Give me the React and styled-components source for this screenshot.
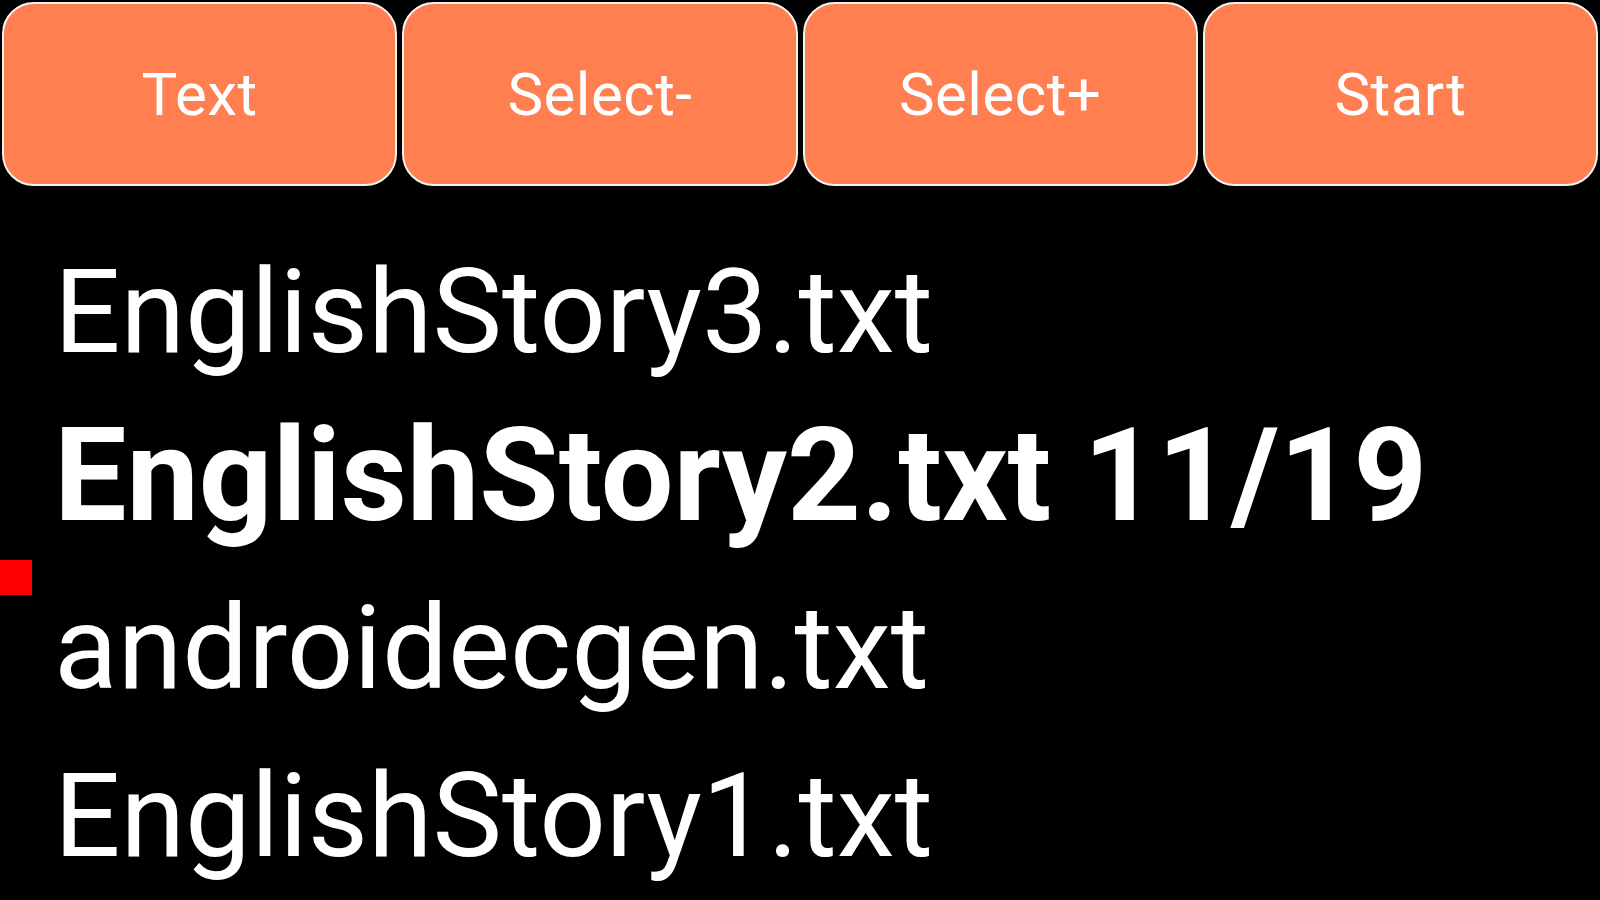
import React from "react";
import styled, { createGlobalStyle } from "styled-components";

const GlobalStyle = createGlobalStyle`
  html, body {
    margin: 0;
    padding: 0;
    background: #000;
  }
  body {
    font-family: Roboto, "Liberation Sans", sans-serif;
  }
`;

const Screen = styled.div`
  width: 1600px;
  height: 900px;
  background: #000;
  overflow: hidden;
`;

const Toolbar = styled.div`
  display: flex;
  gap: 5px;
  padding: 2px 2px 0 2px;
`;

const ToolButton = styled.button`
  flex: 1;
  height: 184px;
  background: #ff7f50;
  border: 2px solid #f4f4f4;
  border-radius: 32px;
  color: #fff;
  font-family: Roboto, "Liberation Sans", sans-serif;
  font-size: 60px;
  letter-spacing: 0.5px;
  padding: 0;
  cursor: pointer;
`;

const FileList = styled.ul`
  position: relative;
  list-style: none;
  margin: 42px 0 0 0;
  padding: 0 0 0 54px;
`;

const FileRow = styled.li`
  color: #fff;
  font-family: Roboto, sans-serif;
  font-size: ${(p) => (p.$current ? "129px" : "117px")};
  font-weight: ${(p) => (p.$current ? 700 : 400)};
  line-height: ${(p) => (p.$current ? "160px" : "168px")};
  height: 168px;
  white-space: nowrap;
`;

const Marker = styled.div`
  position: absolute;
  left: 0;
  top: 332px;
  width: 32px;
  height: 35px;
  background: #ff0000;
`;

const buttons = ["Text", "Select-", "Select+", "Start"];

const files = [
  { name: "EnglishStory3.txt" },
  { name: "EnglishStory2.txt", progress: "11/19", current: true },
  { name: "androidecgen.txt" },
  { name: "EnglishStory1.txt" },
];

export default function App() {
  return (
    <Screen>
      <GlobalStyle />
      <Toolbar>
        {buttons.map((b) => (
          <ToolButton key={b}>{b}</ToolButton>
        ))}
      </Toolbar>
      <FileList>
        <Marker />
        {files.map((f) => (
          <FileRow key={f.name} $current={f.current}>
            {f.name}
            {f.progress && ` ${f.progress}`}
          </FileRow>
        ))}
      </FileList>
    </Screen>
  );
}
